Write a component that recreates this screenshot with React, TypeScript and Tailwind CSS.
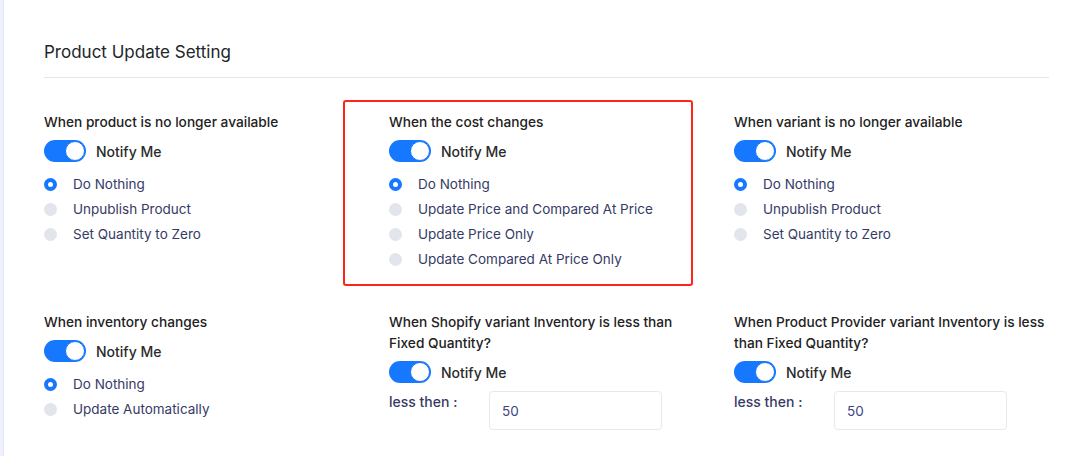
import { useState } from 'react'

type Option = { label: string }

function Toggle({ on }: { on: boolean }) {
  return (
    <span
      className={`relative inline-flex h-[22px] w-[42px] shrink-0 items-center rounded-full ${on ? 'bg-[#1677ff]' : 'bg-[#d9dce3]'}`}
    >
      <span
        className={`absolute top-[1px] h-[20px] w-[20px] rounded-full border border-[#1677ff] bg-white ${on ? 'right-[1px]' : 'left-[1px]'}`}
      />
    </span>
  )
}

function Radio({ checked }: { checked: boolean }) {
  return checked ? (
    <span className="flex h-[13px] w-[13px] shrink-0 items-center justify-center rounded-full bg-[#1677ff]">
      <span className="h-[5px] w-[5px] rounded-full bg-white" />
    </span>
  ) : (
    <span className="h-[13px] w-[13px] shrink-0 rounded-full bg-[#e2e5eb]" />
  )
}

function RadioGroup({ options }: { options: Option[] }) {
  const [value, setValue] = useState(0)
  return (
    <div className="mt-[10px]">
      {options.map((o, i) => (
        <button
          key={o.label}
          onClick={() => setValue(i)}
          className="flex h-[25px] items-center gap-[16px] text-left text-[13.5px] text-[#363b66]"
        >
          <Radio checked={value === i} />
          <span>{o.label}</span>
        </button>
      ))}
    </div>
  )
}

function NotifyRow() {
  return (
    <div className="mt-[7px] flex h-[22px] items-center gap-[10px]">
      <Toggle on />
      <span className="text-[14px] font-medium text-[#2b2b2b]">Notify Me</span>
    </div>
  )
}

function Heading({ children }: { children: React.ReactNode }) {
  return <h3 className="text-[13.7px] font-medium leading-[21px] text-[#222]">{children}</h3>
}

function LessThen() {
  return (
    <div className="mt-2 flex items-start">
      <span className="w-[100px] text-[14px] font-medium leading-[21px] text-[#363b66]">less then :</span>
      <input
        defaultValue="50"
        className="h-[39px] w-[173px] rounded-[4px] border border-[#e6e8ec] px-3 text-[13.5px] text-[#3c4583] outline-none"
      />
    </div>
  )
}

const removeOptions = [{ label: 'Do Nothing' }, { label: 'Unpublish Product' }, { label: 'Set Quantity to Zero' }]

export default function App() {
  return (
    <div className="flex min-h-[456px] bg-white" style={{ fontFamily: 'Inter, "Open Sans", sans-serif' }}>
      <div className="w-[3px] bg-[#eef0fb]" />
      <div className="flex-1 border-l border-[#e3e6f3] pl-[40px] pr-[37px] pt-[39px]">
        <h2 className="text-[17px] leading-[27px] text-[#212529]">Product Update Setting</h2>
        <div className="mt-[11px] h-px bg-[#e5e5e5]" />

        <div className="mt-[34px] grid grid-cols-[345px_345px_1fr] gap-y-[40px]">
          <div>
            <Heading>When product is no longer available</Heading>
            <NotifyRow />
            <RadioGroup options={removeOptions} />
          </div>

          <div className="relative">
            <div className="pointer-events-none absolute left-[-46px] top-[-12px] h-[186px] w-[350px] rounded-[3px] border-2 border-[#ff2418]" />
            <Heading>When the cost changes</Heading>
            <NotifyRow />
            <RadioGroup
              options={[
                { label: 'Do Nothing' },
                { label: 'Update Price and Compared At Price' },
                { label: 'Update Price Only' },
                { label: 'Update Compared At Price Only' },
              ]}
            />
          </div>

          <div>
            <Heading>When variant is no longer available</Heading>
            <NotifyRow />
            <RadioGroup options={removeOptions} />
          </div>

          <div>
            <Heading>When inventory changes</Heading>
            <NotifyRow />
            <RadioGroup options={[{ label: 'Do Nothing' }, { label: 'Update Automatically' }]} />
          </div>

          <div className="pr-[50px]">
            <Heading>When Shopify variant Inventory is less than Fixed Quantity?</Heading>
            <NotifyRow />
            <LessThen />
          </div>

          <div>
            <Heading>When Product Provider variant Inventory is less than Fixed Quantity?</Heading>
            <NotifyRow />
            <LessThen />
          </div>
        </div>
      </div>
    </div>
  )
}
